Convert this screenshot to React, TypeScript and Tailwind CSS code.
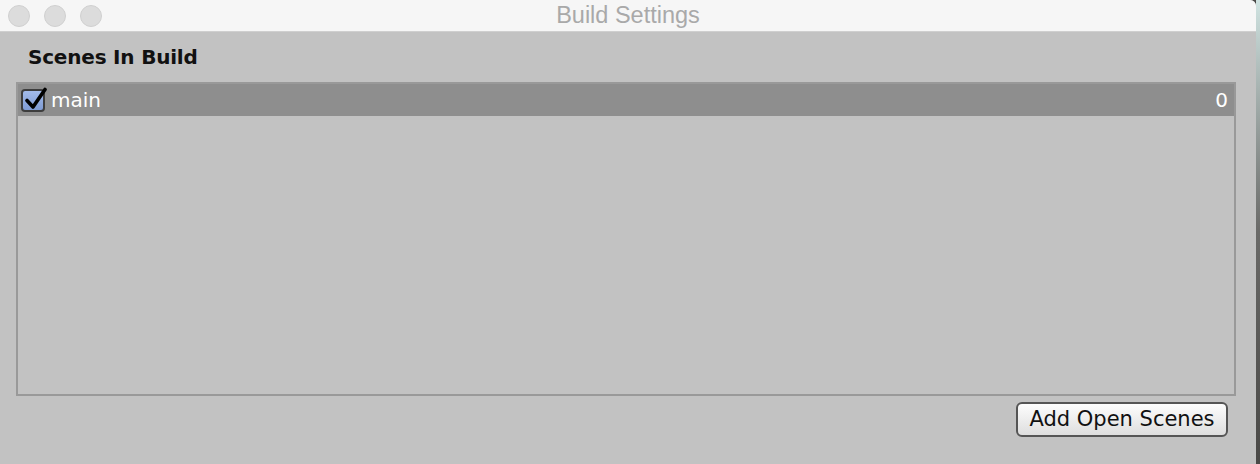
function TrafficLight() {
  return <div className="w-[22px] h-[22px] rounded-full bg-[#dcdcdc] border border-[#d0d0d0]" />;
}

function CheckBox() {
  return (
    <div className="relative w-[24px] h-[23px] rounded-[4px] border-2 border-[#3d3d3d] bg-gradient-to-b from-[#a3bbea] to-[#7f9bd3]">
      <svg className="absolute left-[1px] top-[-4px]" width="24" height="24" viewBox="0 0 24 24" fill="none">
        <path d="M3 13.5 L9 20 L21 2.5" stroke="#000" strokeWidth="3.6" strokeLinecap="round" strokeLinejoin="round" />
      </svg>
    </div>
  );
}

export default function App() {
  return (
    <div className="flex w-[1260px] h-[464px] bg-[#4a4947] overflow-hidden" style={{ fontFamily: '"DejaVu Sans", "Liberation Sans", sans-serif' }}>
      <div className="flex flex-col w-[1256px] h-full bg-[#c2c2c2] rounded-tr-[6px] overflow-hidden">
        {/* title bar */}
        <div className="relative flex items-center h-[32px] shrink-0 bg-[#f6f6f6] border-b border-[#cfcfcf] px-[8px] gap-[14px]">
          <TrafficLight />
          <TrafficLight />
          <TrafficLight />
          <div className="absolute inset-0 flex items-center justify-center pt-[1px] text-[23.5px] text-[#a9a9a9]" style={{ fontFamily: '"Liberation Sans", Arial, sans-serif' }}>
            Build Settings
          </div>
        </div>

        <div className="flex flex-col pl-[16px] pr-[20px] pt-[11px]">
          <div className="pl-[12px] text-[20px] font-bold tracking-[-0.2px] text-[#111] h-[39px] leading-[28px]">Scenes In Build</div>

          {/* scene list */}
          <div className="h-[314px] border-2 border-[#999999] bg-[#c2c2c2]">
            <div className="flex items-center h-[32px] bg-[#8e8e8e] pl-[3px] pr-[6px]">
              <CheckBox />
              <span className="ml-[6px] text-[20px] text-white">main</span>
              <span className="ml-auto text-[20px] text-white">0</span>
            </div>
          </div>

          <div className="flex justify-end pt-[6px] pr-[8px]">
            <button className="h-[35px] w-[212px] rounded-[6px] border-2 border-[#555] bg-gradient-to-b from-[#fdfdfd] to-[#dedede] text-[21px] text-[#111]">
              Add Open Scenes
            </button>
          </div>
        </div>
      </div>
      <div className="w-[4px] h-full bg-gradient-to-b from-[#cfe3e1] via-[#6a6a68] to-[#4a4947]" />
    </div>
  );
}
